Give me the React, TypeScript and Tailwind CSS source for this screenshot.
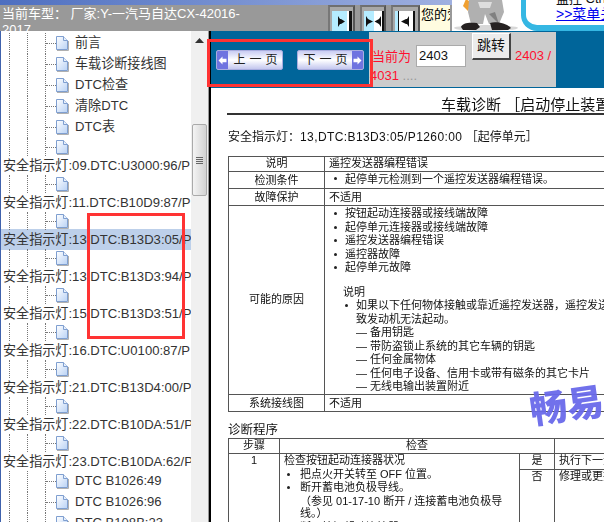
import React from "react";

const cjk = "font-['Liberation_Sans','Noto_Sans_CJK_SC',sans-serif]";

function FileIcon() {
  return (
    <svg width="14" height="16" viewBox="0 0 14 16" className="shrink-0">
      <defs>
        <linearGradient id="pg" x1="0" y1="0" x2="1" y2="1">
          <stop offset="0" stopColor="#ffffff" />
          <stop offset="1" stopColor="#b9d2f5" />
        </linearGradient>
      </defs>
      <path d="M1.5 1.5H8.5L12.5 5.5V14.5H1.5Z" fill="url(#pg)" stroke="#7f9fd0" strokeWidth="1" />
      <path d="M8.5 1.5V5.5H12.5" fill="#e8f0fb" stroke="#7f9fd0" strokeWidth="1" />
      <path d="M2 15.5H13.5V6" fill="none" stroke="#b0b0b0" strokeWidth="1" />
    </svg>
  );
}

function Guides({ h }: { h: string }) {
  return (
    <>
      <span className={`w-[18px] shrink-0 border-l border-dotted border-[#777] ${h}`} />
      <span className={`w-[18px] shrink-0 border-l border-dotted border-[#777] ${h}`} />
    </>
  );
}

function Leaf({ label }: { label: string }) {
  return (
    <div className="flex h-[21px] items-center pl-[8px]">
      <Guides h="h-[21px]" />
      <span className="h-[21px] w-[10px] shrink-0 border-l border-dotted border-[#777]">
        <span className="mt-[10px] block w-[10px] border-t border-dotted border-[#777]" />
      </span>
      <FileIcon />
      <span className="ml-[6px] whitespace-nowrap">{label}</span>
    </div>
  );
}

function Pair({ label, active }: { label: string; active?: boolean }) {
  return (
    <>
      <div className="flex h-[18.5px] items-center pl-[8px]">
        <Guides h="h-[18.5px]" />
        <span className="h-[18.5px] w-[10px] shrink-0 border-l border-dotted border-[#777]">
          <span className="mt-[9px] block h-[9.5px] w-[10px] border-t border-dotted border-[#777]" />
        </span>
        <FileIcon />
      </div>
      <div
        className={`-my-px flex h-[20.5px] items-center whitespace-nowrap pl-[2px] pt-[2px] ${active ? "bg-[#bdd0ea]" : ""}`}
      >
        {label}
      </div>
    </>
  );
}

function Frame({ children, w }: { children: React.ReactNode; w: string }) {
  return (
    <div className={`flex h-[26px] ${w} shrink-0 items-end border-l-2 border-t-2 border-r-2 border-l-[#777] border-t-[#6f6f6f] border-r-[#555] bg-[#a8a8a8] pl-[2px] pr-[3px]`}>
      {children}
    </div>
  );
}

function NavButton({ label, dir }: { label: string; dir: "l" | "r" }) {
  const arrow = (
    <span className="flex h-full w-[11px] shrink-0 items-center justify-center bg-[#6f74e0]">
      <svg width="9" height="9" viewBox="0 0 9 9">
        {dir === "l" ? (
          <path d="M0.5 4.5L4.5 0.5V2.8H8.5V6.2H4.5V8.5Z" fill="#fff" />
        ) : (
          <path d="M8.5 4.5L4.5 0.5V2.8H0.5V6.2H4.5V8.5Z" fill="#fff" />
        )}
      </svg>
    </span>
  );
  return (
    <div className="flex h-[20px] w-[67px] items-stretch overflow-hidden rounded-[2px] border border-[#a9addf] bg-gradient-to-b from-[#c9ccf2] via-white to-[#c4c7ee]">
      {dir === "l" && arrow}
      <span className="flex-1 pl-[5px] text-center text-[12px] leading-[18px] tracking-[4px] text-[#222]">{label}</span>
      {dir === "r" && arrow}
    </div>
  );
}

function L({ children, className = "" }: { children?: React.ReactNode; className?: string }) {
  return <div className={`h-[13.5px] whitespace-nowrap ${className}`}>{children}</div>;
}

function B({ children }: { children: React.ReactNode }) {
  return (
    <L className="flex items-center">
      <span className="mr-[8px] ml-[3px] h-[3px] w-[3px] rounded-full bg-[#222]" />
      {children}
    </L>
  );
}

const cell = "border border-[#555] align-top whitespace-nowrap p-0";

export default function App() {
  return (
    <div className={`relative flex h-[522px] w-[604px] flex-col overflow-hidden bg-white ${cjk}`}>
      <header className="flex h-[31px] shrink-0 overflow-hidden">
        <div className="flex w-[452px] shrink-0 flex-col">
          <div className="h-[5px] bg-gradient-to-r from-[#4e6fc0] to-[#9fb0e0]" />
          <div className="flex h-[26px] bg-[#999]">
            <div className="h-[26px] w-[240px] shrink-0 overflow-hidden pl-[2px] pt-px text-[13px] leading-[16px] text-white">
              当前车型： 厂家:Y-一汽马自达CX-42016-2017
            </div>
            <div className="ml-[88px] flex">
              <Frame w="w-[27px]">
                <svg width="20" height="20" viewBox="0 0 20 20" className="shrink-0">
                  <rect width="20" height="20" fill="#b5ecff" />
                  <rect x="15" width="2" height="20" fill="#fff" />
                  <rect x="17" width="3" height="20" fill="#111" />
                  <path d="M6 5L8 8H9L13 10.5L9 13H8L6 16Z" fill="#111" />
                </svg>
              </Frame>
              <span className="w-[5px]" />
              <Frame w="w-[26px]">
                <svg width="20" height="20" viewBox="0 0 20 20" className="shrink-0">
                  <rect width="10" height="20" fill="#b5ecff" />
                  <rect x="10" width="8" height="20" fill="#fff" />
                  <rect x="18" width="2" height="20" fill="#111" />
                  <path d="M2 5L4 8L9 10.5L4 13L2 16Z M17 5L15 8L10.500 10.5L15 13L17 16Z" fill="#111" />
                </svg>
              </Frame>
              <span className="w-[5px]" />
              <Frame w="w-[29px]">
                <svg width="20" height="20" viewBox="0 0 20 20" className="shrink-0">
                  <rect width="20" height="20" fill="#fff" />
                  <rect width="3" height="20" fill="#b5ecff" />
                  <rect x="3" width="1" height="20" fill="#111" />
                  <path d="M14 5L12 8H11L6 10.5L11 13H12L14 16Z" fill="#111" />
                  <rect x="18" width="2" height="20" fill="#111" />
                </svg>
              </Frame>
            </div>
            <div className="h-[26px] w-[30px] shrink-0 overflow-hidden whitespace-nowrap bg-[#fffce0] pl-[1px] text-[13px] leading-[20px] text-black">
              您的爱车
            </div>
          </div>
        </div>
        <div className="flex flex-1 bg-white">
          <svg width="69" height="31" viewBox="0 0 69 31" className="shrink-0">
            <ellipse cx="34" cy="28" rx="32" ry="3" fill="#d8d8d8" />
            <path d="M14 -1L11 6L16 11L20 3Z" fill="#f0a030" />
            <path d="M17 0H50L52 12L47 24H37L33 14L31 24H19L16 12Z" fill="#b0b0b0" />
            <path d="M26 2H40L38 8H28Z" fill="#dedede" />
            <path d="M37 14L47 24L43 12Z" fill="#808080" />
            <path d="M9 27C10 23 17 22 25 23L28 27L24 30H11Z" fill="#262222" />
            <path d="M38 23C45 21 55 24 59 28L56 30H40Z" fill="#262222" />
          </svg>
          <div className="flex h-[31px] flex-1 flex-col overflow-hidden rounded-bl-[16px] border-b-[6px] border-l-[5px] border-[#35b7e3] pl-[30px] text-[13px] leading-[16px]">
            <div className="-mt-[9px] whitespace-nowrap text-[#111]">监控 Ctrl+</div>
            <div className="mt-[-1px] whitespace-nowrap text-[14px] text-[#0000ee] underline">&gt;&gt;菜单关闭</div>
          </div>
        </div>
      </header>

      <div className="flex min-h-0 flex-1">
        <aside className="flex w-[208px] shrink-0 border-l border-[#3f62ad]">
          <div className="w-[190px] overflow-hidden pt-[1.5px] text-[13.1px] text-[#333]">
            <Leaf label="前言" />
            <Leaf label="车载诊断接线图" />
            <Leaf label="DTC检查" />
            <Leaf label="清除DTC" />
            <Leaf label="DTC表" />
            <Pair label="安全指示灯:09.DTC:U3000:96/P" />
            <Pair label="安全指示灯:11.DTC:B10D9:87/P" />
            <Pair label="安全指示灯:13.DTC:B13D3:05/P" active />
            <Pair label="安全指示灯:13.DTC:B13D3:94/P" />
            <Pair label="安全指示灯:15.DTC:B13D3:51/P" />
            <Pair label="安全指示灯:16.DTC:U0100:87/P" />
            <Pair label="安全指示灯:21.DTC:B13D4:00/P" />
            <Pair label="安全指示灯:22.DTC:B10DA:51/P" />
            <Pair label="安全指示灯:23.DTC:B10DA:62/P" />
            <Leaf label="DTC B1026:49" />
            <Leaf label="DTC B1026:96" />
            <Leaf label="DTC B108B:23" />
          </div>
          <div className="flex w-[17px] shrink-0 flex-col items-center bg-[#f0f0f0]">
            <svg width="9" height="5" viewBox="0 0 9 5" className="mt-[7px]">
              <path d="M0 5L4.500 0L9 5Z" fill="#333" />
            </svg>
            <div className="mt-[81px] flex h-[72px] w-[15px] flex-col items-center justify-center gap-px rounded-[2px] border border-[#aaa] bg-gradient-to-r from-[#f4f4f4] to-[#d2d2d2]">
              <span className="h-px w-[7px] bg-[#666]" />
              <span className="h-px w-[7px] bg-[#666]" />
              <span className="h-px w-[7px] bg-[#666]" />
              <span className="h-px w-[7px] bg-[#666]" />
            </div>
          </div>
        </aside>
        <div className="w-[3px] shrink-0 border-l border-[#999] bg-black" />

        <main className="flex min-w-0 flex-1 flex-col overflow-hidden">
          <div className="flex h-[57px] shrink-0 border-b border-t border-[#00659a] bg-[#00659a]">
            <div className="flex w-[158px] shrink-0 items-start gap-[14px] pl-[5px] pt-[18px]">
              <NavButton label="上一页" dir="l" />
              <NavButton label="下一页" dir="r" />
            </div>
            <div className="w-[187px] shrink-0 bg-[#cccccc] pl-[3px] text-[13px] text-[#ff1030]">
              <div className="flex h-[35px] items-start">
                <span className="mt-[17px] leading-[16px]">当前为</span>
                <span className="ml-[5px] mt-[13px] h-[22px] w-[50px] border border-[#aaa] bg-white pl-[2px] leading-[20px] text-[#111]">
                  2403
                </span>
                <span className="ml-[6px] mt-[1px] h-[27px] w-[39px] border-b-2 border-l border-r-2 border-t border-b-[#444] border-l-white border-r-[#444] border-t-white bg-[#ececec] text-center text-[14px] leading-[22px] text-[#111]">
                  跳转
                </span>
                <span className="ml-[4px] mt-[16px] leading-[16px]">2403 /</span>
              </div>
              <div className="-ml-[2px] mt-[1px] whitespace-nowrap leading-[16px]">
                4031 <span className="text-[#999]">....</span>
              </div>
            </div>
          </div>

          <div className="min-h-0 flex-1 overflow-hidden bg-white text-[11px] leading-[13.5px] text-[#111] blur-[0.3px]">
            <div className="ml-[16px] h-[27px] border-b-2 border-[#333] pl-[214px] pt-[8px] text-[15px] leading-[18px] whitespace-nowrap">
              车载诊断 ［启动停止装置
            </div>
            <div className="ml-[17px] mt-[14px] whitespace-nowrap text-[12px] leading-[16px]">
              安全指示灯：<span className="tracking-[0.4px]">13,DTC:B13D3:05/P1260:00</span> ［起停单元］
            </div>
            <table className="ml-[17px] mt-[11px] w-[440px] table-fixed border-collapse">
              <colgroup>
                <col className="w-[96px]" />
                <col />
              </colgroup>
              <tbody>
                <tr className="h-[15px]">
                  <td className={`${cell} text-center`}>说明</td>
                  <td className={`${cell} pl-[4px]`}>遥控发送器编程错误</td>
                </tr>
                <tr className="h-[17px]">
                  <td className={`${cell} text-center leading-[16px]`}>检测条件</td>
                  <td className={`${cell} pl-[6px] leading-[16px]`}>
                    <B>起停单元检测到一个遥控发送器编程错误。</B>
                  </td>
                </tr>
                <tr className="h-[16px]">
                  <td className={`${cell} text-center leading-[16px]`}>故障保护</td>
                  <td className={`${cell} pl-[4px] leading-[16px]`}>不适用</td>
                </tr>
                <tr className="h-[189px]">
                  <td className={`${cell} !align-middle text-center`}>可能的原因</td>
                  <td className={`${cell} pl-[6px] pt-[1px]`}>
                    <B>按钮起动连接器或接线端故障</B>
                    <B>起停单元连接器或接线端故障</B>
                    <B>遥控发送器编程错误</B>
                    <B>遥控器故障</B>
                    <B>起停单元故障</B>
                    <div className="h-[11px]" />
                    <L className="pl-[12px]">说明</L>
                    <L className="flex items-center pl-[14px]">
                      <span className="mr-[8px] h-[3px] w-[3px] rounded-full bg-[#222]" />
                      如果以下任何物体接触或靠近遥控发送器，遥控发送器
                    </L>
                    <L className="pl-[25px]">致发动机无法起动。</L>
                    <L className="pl-[25px]">— 备用钥匙</L>
                    <L className="pl-[25px]">— 带防盗锁止系统的其它车辆的钥匙</L>
                    <L className="pl-[25px]">— 任何金属物体</L>
                    <L className="pl-[25px]">— 任何电子设备、信用卡或带有磁条的其它卡片</L>
                    <L className="pl-[25px]">— 无线电输出装置附近</L>
                  </td>
                </tr>
                <tr className="h-[16px]">
                  <td className={`${cell} text-center leading-[16px]`}>系统接线图</td>
                  <td className={`${cell} pl-[4px] leading-[16px]`}>不适用</td>
                </tr>
              </tbody>
            </table>
            <div className="ml-[17px] mt-[11px] h-[15px] text-[12.5px] leading-[15px]">诊断程序</div>
            <table className="ml-[17px] w-[440px] table-fixed border-collapse">
              <colgroup>
                <col className="w-[51px]" />
                <col className="w-[240px]" />
                <col className="w-[35px]" />
                <col />
              </colgroup>
              <tbody>
                <tr className="h-[15px]">
                  <td className={`${cell} text-center`}>步骤</td>
                  <td className={`${cell} text-center`} colSpan={2}>检查</td>
                  <td className={cell} />
                </tr>
                <tr className="h-[15px]">
                  <td className={`${cell} text-center`} rowSpan={2}>1</td>
                  <td className={`${cell} pl-[4px]`} rowSpan={2}>
                    <L>检查按钮起动连接器状况</L>
                    <L className="flex items-center pl-[3px]">
                      <span className="mr-[10px] h-[3px] w-[3px] rounded-full bg-[#222]" />
                      把点火开关转至 OFF 位置。
                    </L>
                    <L className="flex items-center pl-[3px]">
                      <span className="mr-[10px] h-[3px] w-[3px] rounded-full bg-[#222]" />
                      断开蓄电池负极导线。
                    </L>
                    <L className="pl-[16px]">（参见 01-17-10 断开 / 连接蓄电池负极导</L>
                    <L className="-mt-[1px] pl-[16px]">线。）</L>
                    <L className="pl-[16px]">断开按钮起动连接器。</L>
                  </td>
                  <td className={`${cell} text-center`}>是</td>
                  <td className={`${cell} pl-[4px]`}>执行下一步。</td>
                </tr>
                <tr className="h-[60px]">
                  <td className={`${cell} text-center`}>否</td>
                  <td className={`${cell} pl-[4px]`}>修理或更换连接器。</td>
                </tr>
              </tbody>
            </table>
          </div>
        </main>
      </div>

      <div className="pointer-events-none absolute left-[207px] top-[39px] h-[48px] w-[166px] border-[3px] border-[#f33]" />
      <div className="pointer-events-none absolute left-[87px] top-[213px] h-[126px] w-[98px] border-[3px] border-[#f33]" />
      <div className="pointer-events-none absolute left-[530px] top-[385px] -rotate-[8deg] whitespace-nowrap text-[37px] font-black leading-[44px] text-[#6a6aea] opacity-95">
        畅易
      </div>
    </div>
  );
}
